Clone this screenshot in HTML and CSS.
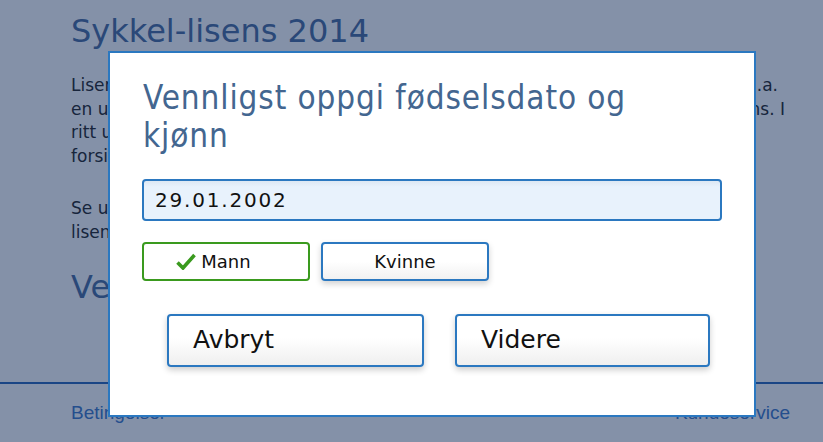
FILE: index.html
```html
<!DOCTYPE html>
<html lang="no">
<head>
<meta charset="utf-8">
<title>Sykkel-lisens 2014</title>
<link rel="stylesheet" href="styles.css">
</head>
<body>
<div class="page">
  <main class="content">
    <h1 class="page-title">Sykkel-lisens 2014</h1>
    <div class="text">
      <div class="line split first"><span>Lisensen gjelder for alle som skal delta i terminfestede ritt, og gir</span><span>bl.a.</span></div>
      <div class="line split"><span>en ulykkesforsikring som dekker skader i ritt og trening med</span><span>lisens. I</span></div>
      <div class="line">ritt utenfor Norge gjelder egne regler for</div>
      <div class="line">forsikringen.</div>
    </div>
    <div class="text second">
      <div class="line">Se ulike typer lisens under for</div>
      <div class="line">lisenser.</div>
    </div>
    <h2 class="section-title">Velg lisens</h2>
  </main>
  <footer class="footer">
    <a class="footer-link">Betingelser</a>
    <a class="footer-link">Kundeservice</a>
  </footer>
</div>

<div class="overlay"></div>

<div class="modal">
  <h2 class="modal-title">Vennligst oppgi fødselsdato og kjønn</h2>
  <input class="date-input" type="text" value="29.01.2002">
  <div class="gender-row">
    <button class="gender selected"><span class="label"><svg class="check" width="20" height="17" viewBox="0 0 20 17"><path d="M1.5 9.5 L7 15 L18.5 2" fill="none" stroke="#3a9a1e" stroke-width="3.6" stroke-linejoin="miter"/></svg>Mann</span></button>
    <button class="gender"><span class="label">Kvinne</span></button>
  </div>
  <div class="action-row">
    <button class="action">Avbryt</button>
    <button class="action">Videre</button>
  </div>
</div>
</body>
</html>
```
FILE: styles.css
```css
html, body {
  margin: 0;
  padding: 0;
}
body {
  background: #ffffff;
  font-family: "DejaVu Sans", Verdana, sans-serif;
  width: 823px;
  height: 442px;
  overflow: hidden;
}
.page {
  display: flex;
  flex-direction: column;
  height: 442px;
  background: #ffffff;
}
.content {
  padding: 11px 38px 0 71px;
  flex: 1;
}
.page-title {
  margin: 0;
  font-size: 32px;
  line-height: 40px;
  font-weight: normal;
  color: #4a6c9e;
}
.text {
  margin-top: 23px;
  font-size: 17px;
  line-height: 23.5px;
  color: #262626;
}
.text.second {
  margin-top: 29px;
}
.line.split {
  display: flex;
  justify-content: space-between;
}
.line.split.first {
  margin-right: 7px;
}
.section-title {
  margin: 23px 0 0;
  font-size: 32px;
  line-height: 40px;
  font-weight: normal;
  color: #4a6c9e;
}
.footer {
  border-top: 2px solid #2a66b8;
  height: 58px;
  display: flex;
  justify-content: space-between;
  align-items: center;
  padding: 0 33px 0 71px;
  font-family: "Liberation Sans", Arial, sans-serif;
  font-size: 19px;
}
.footer-link {
  color: #4078c8;
}
.overlay {
  position: fixed;
  inset: 0;
  background: rgba(10, 36, 82, 0.5);
}
.modal {
  position: fixed;
  left: 108px;
  top: 51px;
  width: 580px;
  height: 362px;
  padding: 0 32px;
  background: #ffffff;
  border: 2px solid #2b78c0;
  display: flex;
  flex-direction: column;
}
.modal-title {
  margin: 26px 0 0 1px;
  max-width: 540px;
  font-family: "DejaVu Sans Condensed", "DejaVu Sans", sans-serif;
  font-stretch: condensed;
  font-size: 33px;
  letter-spacing: 0.9px;
  line-height: 38px;
  font-weight: normal;
  color: #436690;
}
.date-input {
  margin-top: 24px;
  height: 42px;
  box-sizing: border-box;
  border: 2px solid #2b78c0;
  border-radius: 4px;
  background: linear-gradient(#dde8f3, #e8f2fc 6px);
  padding: 0 11px;
  font-family: "DejaVu Sans", Verdana, sans-serif;
  font-size: 20px;
  letter-spacing: 1.8px;
  color: #111;
  outline: none;
}
.gender-row {
  display: flex;
  gap: 11px;
  margin-top: 21px;
}
.gender {
  width: 168px;
  height: 39px;
  box-sizing: border-box;
  border: 2px solid #2b78c0;
  border-radius: 4px;
  background: linear-gradient(#ffffff, #ffffff 50%, #f1f1f1);
  box-shadow: 0 3px 6px rgba(0, 0, 0, 0.18);
  font-family: "DejaVu Sans", Verdana, sans-serif;
  font-size: 18px;
  color: #111;
  display: flex;
  align-items: center;
  justify-content: center;
  padding: 0;
}
.gender.selected {
  border-color: #3a9a1e;
  background: #ffffff;
  box-shadow: none;
}
.label {
  position: relative;
}
.check {
  position: absolute;
  right: 100%;
  top: 2px;
  margin-right: 5px;
}
.action-row {
  display: flex;
  gap: 31px;
  margin-top: 33px;
  padding-left: 25px;
}
.action {
  width: 257px;
  height: 53px;
  box-sizing: border-box;
  border: 2px solid #2b78c0;
  border-radius: 4px;
  background: linear-gradient(#ffffff, #ffffff 45%, #efefef);
  box-shadow: 0 3px 6px rgba(0, 0, 0, 0.2);
  font-family: "DejaVu Sans", Verdana, sans-serif;
  font-size: 25px;
  color: #111;
  text-align: left;
  padding: 0 0 2px 24px;
}
.action + .action {
  width: 255px;
}
```
